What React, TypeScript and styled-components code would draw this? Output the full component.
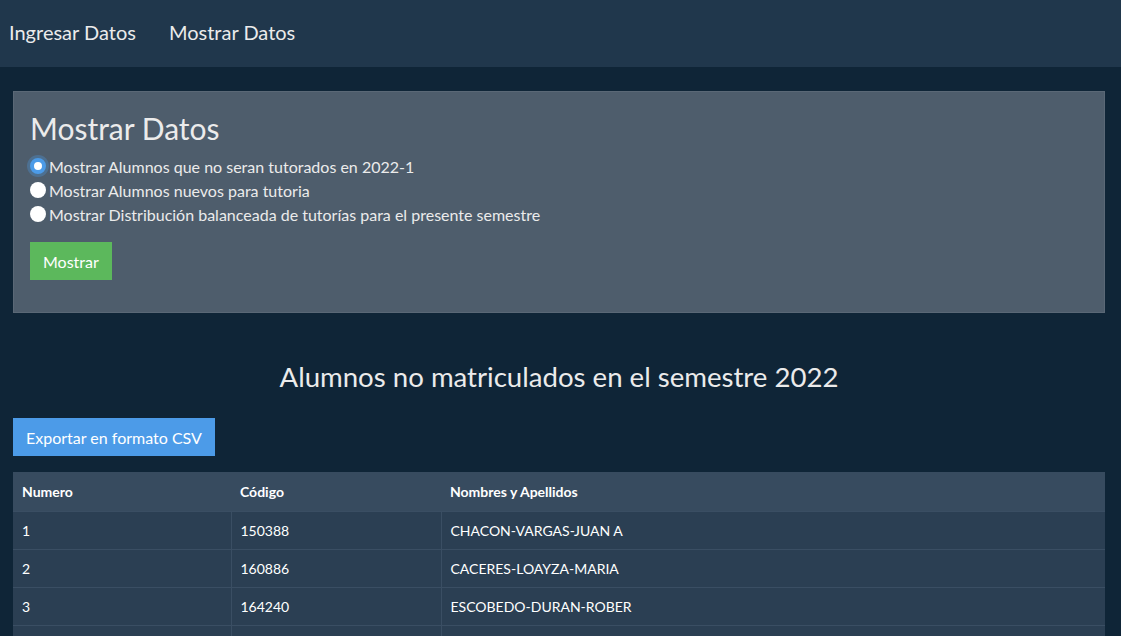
import * as React from 'react'
import styled, { createGlobalStyle } from 'styled-components'

const colors = {
  page: '#0f2537',
  navbar: '#20374c',
  card: '#4e5d6c',
  cardBorder: '#5a6876',
  text: '#ebebeb',
  success: '#5cb85c',
  primary: '#4c9be8',
  thead: '#374b5f',
  row: '#2b3f53',
  rowBorder: '#3a4e63'
}

const GlobalStyle = createGlobalStyle`
  body {
    margin: 0;
    background: ${colors.page};
    color: ${colors.text};
    font-family: Lato, "Noto Sans", sans-serif;
    font-size: 16px;
  }
`

const Navbar = styled.nav`
  height: 67px;
  background: ${colors.navbar};
  display: flex;
  align-items: center;
  gap: 33px;
  padding: 0 9px;
`

const NavLink = styled.a`
  font-size: 20px;
  color: ${colors.text};
  text-decoration: none;
  margin-top: -4px;
`

const Main = styled.main`
  padding: 24px 16px 0 13px;
`

const Card = styled.section`
  background: ${colors.card};
  border: 1px solid ${colors.cardBorder};
  padding: 16px 16px 32px 16px;
`

const CardTitle = styled.h1`
  margin: 2px 0 8px;
  font-size: 30px;
  font-weight: 400;
  line-height: 36px;
  color: ${colors.text};
`

const RadioRow = styled.label`
  display: flex;
  align-items: center;
  gap: 3px;
  height: 24px;
  font-size: 16px;
`

const Radio = styled.span<{ checked?: boolean }>`
  width: 16px;
  height: 16px;
  border-radius: 50%;
  box-sizing: border-box;
  background: #fff;
  border: ${({ checked }) => (checked ? `4px solid ${colors.primary}` : 'none')};
  box-shadow: ${({ checked }) => (checked ? '0 0 0 3px rgba(76,155,232,0.3)' : 'none')};
`

const Button = styled.button<{ variant: 'success' | 'primary' }>`
  display: block;
  border: none;
  font-family: inherit;
  font-size: 16px;
  color: #fff;
  background: ${({ variant }) => colors[variant]};
  height: 38px;
  padding: 0 13px;
  cursor: pointer;
`

const ShowButton = styled(Button)`
  margin-top: 16px;
`

const SectionTitle = styled.h2`
  margin: 47px 0 25px;
  text-align: center;
  font-size: 27.6px;
  font-weight: 400;
  line-height: 1.2;
  color: ${colors.text};
`

const Table = styled.table`
  width: 100%;
  margin-top: 16px;
  border-collapse: collapse;
  font-size: 14px;
  color: #fff;
`

const HeadCell = styled.th<{ w?: number }>`
  background: ${colors.thead};
  text-align: left;
  font-weight: 700;
  height: 39px;
  padding: 0 9px;
  box-sizing: border-box;
  width: ${({ w }) => (w ? `${w}px` : 'auto')};
`

const Cell = styled.td`
  background: ${colors.row};
  height: 38px;
  padding: 0 9px;
  box-sizing: border-box;
  border-top: 1px solid ${colors.rowBorder};
  & + & {
    border-left: 1px solid ${colors.rowBorder};
  }
`

const options = [
  'Mostrar Alumnos que no seran tutorados en 2022-1',
  'Mostrar Alumnos nuevos para tutoria',
  'Mostrar Distribución balanceada de tutorías para el presente semestre'
]

const rows = [
  ['1', '150388', 'CHACON-VARGAS-JUAN A'],
  ['2', '160886', 'CACERES-LOAYZA-MARIA'],
  ['3', '164240', 'ESCOBEDO-DURAN-ROBER'],
  ['4', '171503', 'MAMANI-QUISPE-LUIS']
]

const App = () => (
  <>
    <GlobalStyle />
    <Navbar>
      <NavLink href="#">Ingresar Datos</NavLink>
      <NavLink href="#">Mostrar Datos</NavLink>
    </Navbar>
    <Main>
      <Card>
        <CardTitle>Mostrar Datos</CardTitle>
        {options.map((o, i) => (
          <RadioRow key={o}>
            <Radio checked={i === 0} />
            {o}
          </RadioRow>
        ))}
        <ShowButton variant="success">Mostrar</ShowButton>
      </Card>
      <SectionTitle>Alumnos no matriculados en el semestre 2022</SectionTitle>
      <Button variant="primary">Exportar en formato CSV</Button>
      <Table>
        <thead>
          <tr>
            <HeadCell w={218}>Numero</HeadCell>
            <HeadCell w={210}>Código</HeadCell>
            <HeadCell>Nombres y Apellidos</HeadCell>
          </tr>
        </thead>
        <tbody>
          {rows.map(r => (
            <tr key={r[0]}>
              {r.map((c, j) => (
                <Cell key={j}>{c}</Cell>
              ))}
            </tr>
          ))}
        </tbody>
      </Table>
    </Main>
  </>
)

export default App
